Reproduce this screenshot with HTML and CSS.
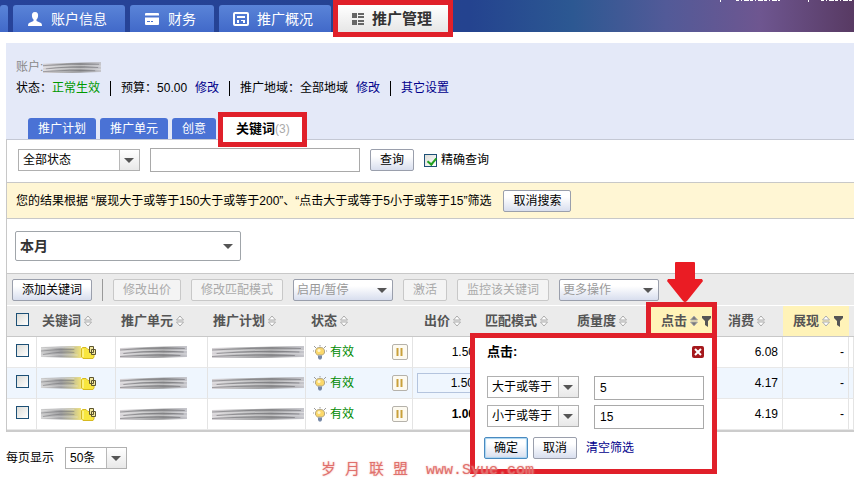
FILE: index.html
```html
<!DOCTYPE html>
<html lang="zh-CN">
  <head>
    <meta charset="UTF-8" />
    <meta name="viewport" content="width=device-width, initial-scale=1.0" />
    <title>推广管理</title>
    <link rel="stylesheet" href="styles.css">
  </head>
  <body>
    <!-- shared icons -->
    <svg class="defs" aria-hidden="true">
      <defs>
        <linearGradient id="fade">
          <stop offset="0" stop-color="#d8d4d8" />
          <stop offset="0.3" stop-color="#b8b8ba" />
          <stop offset="0.65" stop-color="#98989a" />
          <stop offset="1" stop-color="#c6c6cc" />
        </linearGradient>
        <linearGradient id="fade-yellow">
          <stop offset="0" stop-color="#d0d0d0" />
          <stop offset="0.5" stop-color="#a0a0a2" />
          <stop offset="0.75" stop-color="#bcb99a" />
          <stop offset="1" stop-color="#f0e27a" />
        </linearGradient>
      </defs>
      <symbol id="smudge" viewBox="0 0 60 12" preserveAspectRatio="none">
        <path d="M0 2L25 1L60 0V11L30 12L0 12Z" fill="url(#fade)" />
        <path d="M0 4Q30 1 58 2.500M3 7.500Q32 4 57 6M0 10.500Q28 8 54 9.500" fill="none" stroke="#606064" stroke-width="1" opacity="0.5" />
        <path d="M0 6Q25 3 60 4.500M0 9Q25 6 60 8" fill="none" stroke="#f4f4f4" stroke-width="1" opacity="0.5" />
      </symbol>
      <symbol id="smudge-word" viewBox="0 0 60 12" preserveAspectRatio="none">
        <path d="M0 1L60 0V12L0 11Z" fill="url(#fade-yellow)" />
        <path d="M0 5Q25 3 50 3.500M3 8.500Q32 5 50 6.500" fill="none" stroke="#606064" stroke-width="1" opacity="0.5" />
        <path d="M0 3Q20 1 50 1.500M0 10Q25 8 55 9" fill="none" stroke="#f4f4f4" stroke-width="1" opacity="0.5" />
      </symbol>
      <symbol id="sort" viewBox="0 0 8 12">
        <path class="up" d="M4 1L7.500 5H0.500Z" />
        <path class="down" d="M4 11L7.500 7H0.500Z" />
      </symbol>
      <symbol id="funnel" viewBox="0 0 9 11">
        <path d="M0 0H9V2L6 5V11L3 9V5L0 2Z" fill="#555" />
      </symbol>
      <symbol id="folder" viewBox="0 0 16 13">
        <path d="M0.500 2.500L1.500 1.500H5L7 3.500H13V11L12 12.500H2L0.500 11Z" fill="#f8e63e" stroke="#d6b920" />
        <path d="M2 3V11" stroke="#fffbc0" />
        <path d="M8.500 0.500H12.500V6.500H8.500ZM10.500 3.500H14.500V8.500H10.500Z" fill="#f3e9a0" stroke="#5d552f" />
      </symbol>
      <symbol id="bulb" viewBox="0 0 14 15">
        <path d="M7 0V1.500M1 1L3 3M13 1L11 3M0 6H1M13 6H14" stroke="#9a9a9a" fill="none" />
        <path d="M7 2.500A4 4 0 0 1 9.500 10H4.500A4 4 0 0 1 7 2.500Z" fill="#fbd86a" stroke="#b4a680" />
        <circle cx="6" cy="5.500" r="1.500" fill="#fff6cf" />
        <path d="M5 10.500H9V13L8 14.500H6L5 13Z" fill="#7688a6" />
      </symbol>
      <symbol id="pause" viewBox="0 0 16 16">
        <rect x="0.500" y="0.500" width="15" height="15" rx="1.500" fill="#fdfaf0" stroke="#b5b2ab" />
        <path d="M5.500 4V12M9.500 4V12" stroke="#c9a03a" stroke-width="2" />
      </symbol>
    </svg>

    <header>
      <nav class="main-nav">
        <a href="#" class="stub" aria-label="首页"></a>
        <a href="#">
          <svg width="16" height="14" viewBox="0 0 16 14"><path d="M8 0C10.500 0 11.500 2 11 4.500C10.800 6 10 7 9.500 7.500V9L14 11Q15 11.500 15 14H1Q1 11.500 2 11L6.500 9V7.500C6 7 5.200 6 5 4.500C4.500 2 5.500 0 8 0Z" fill="#fff" /></svg>
          账户信息
        </a>
        <a href="#">
          <svg width="16" height="14" viewBox="0 0 16 14"><rect x="1" y="1" width="14" height="12" rx="1" fill="#fff" /><path d="M1 4.500H15" stroke="#4a73cf" stroke-width="2" /><path d="M3 9.500H6M7 9.500H9" stroke="#4a73cf" /></svg>
          财务
        </a>
        <a href="#">
          <svg width="16" height="14" viewBox="0 0 16 14"><rect x="1" y="1" width="14" height="12" rx="1" fill="none" stroke="#fff" stroke-width="2" /><path d="M4 5H12" stroke="#fff" stroke-width="2" /><path d="M4 8H6V11H4ZM8 8H12V11H10V9H8Z" fill="#fff" /></svg>
          推广概况
        </a>
        <a href="#" class="active">
          <svg width="12" height="12" viewBox="0 0 12 12"><path d="M0 0H5V5H0ZM0 7H5V12H0ZM6 0H12V2H6ZM6 3H12V5H6ZM6 7H12V9H6ZM6 10H12V12H6Z" fill="#666" /></svg>
          推广管理
        </a>
      </nav>
      <svg class="user-links" width="134" height="3" viewBox="0 0 134 3" aria-hidden="true">
        <path d="M0.500 0V2M88.500 0V2" stroke="#fff" />
        <path d="M16 0.500H60M101 0.500H134" stroke="#fff" stroke-dasharray="3 2 1 2 5 1" />
      </svg>
    </header>

    <main>
      <section class="account">
        <p class="name">账户:<svg class="blur-name"><use href="#smudge" /></svg></p>
        <ul class="info">
          <li>状态：<span class="ok">正常生效</span></li>
          <li>预算：50.00 <a href="#">修改</a></li>
          <li>推广地域：全部地域 <a href="#">修改</a></li>
          <li><a href="#">其它设置</a></li>
        </ul>
        <nav class="sub-nav">
          <a href="#">推广计划</a>
          <a href="#">推广单元</a>
          <a href="#">创意</a>
          <a href="#" class="active">关键词<small>(3)</small></a>
        </nav>
      </section>

      <div class="panel">
        <form class="search">
          <span class="select state"><select aria-label="状态"><option>全部状态</option></select></span>
          <input type="text" class="query" aria-label="关键词" />
          <button type="button">查询</button>
          <label><input type="checkbox" checked />精确查询</label>
        </form>

        <div class="notice">
          <span>您的结果根据 “展现大于或等于150大于或等于200”、“点击大于或等于5小于或等于15”筛选</span>
          <button type="button">取消搜索</button>
        </div>

        <div class="period">
          <span class="select big"><select aria-label="时间范围"><option>本月</option></select></span>
        </div>

        <div class="toolbar">
          <button type="button">添加关键词</button>
          <i class="line"></i>
          <button type="button" disabled>修改出价</button>
          <button type="button" disabled>修改匹配模式</button>
          <span class="select action"><select aria-label="启用/暂停"><option>启用/暂停</option></select></span>
          <button type="button" disabled>激活</button>
          <button type="button" disabled>监控该关键词</button>
          <span class="select action"><select aria-label="更多操作"><option>更多操作</option></select></span>
        </div>

        <table>
          <colgroup>
            <col class="c-check" />
            <col class="c-word" />
            <col class="c-unit" />
            <col class="c-plan" />
            <col class="c-status" />
            <col class="c-bid" />
            <col class="c-match" />
            <col class="c-quality" />
            <col class="c-num" />
            <col class="c-num" />
            <col class="c-num" />
            <col />
          </colgroup>
          <thead>
            <tr>
              <th><input type="checkbox" aria-label="全选" /></th>
              <th>关键词<svg class="sort"><use href="#sort" /></svg></th>
              <th>推广单元<svg class="sort"><use href="#sort" /></svg></th>
              <th>推广计划<svg class="sort"><use href="#sort" /></svg></th>
              <th>状态<svg class="sort"><use href="#sort" /></svg></th>
              <th class="wide">出价<svg class="sort"><use href="#sort" /></svg></th>
              <th>匹配模式<svg class="sort"><use href="#sort" /></svg></th>
              <th>质量度<svg class="sort"><use href="#sort" /></svg></th>
              <th class="filtered current">点击<svg class="sort asc"><use href="#sort" /></svg><svg class="funnel"><use href="#funnel" /></svg>
                <svg class="arrow" viewBox="0 0 36 40"><path d="M9 0H27Q28 0 28 1V17H35L36 19L20 39Q18 41 16 39L0 19L1 17H8V1Q8 0 9 0Z" fill="#ea1c24" /></svg>
                <form class="popup">
                  <div class="popup-head">
                    <strong>点击:</strong>
                    <button type="button" class="close" aria-label="关闭"><svg width="12" height="12" viewBox="0 0 12 12"><rect width="12" height="12" rx="2" fill="#a5181c" /><path d="M3 3L9 9M9 3L3 9" stroke="#fff" stroke-width="2" /></svg></button>
                  </div>
                  <div class="cond">
                    <span class="select"><select aria-label="下限条件"><option>大于或等于</option></select></span>
                    <input type="text" value="5" aria-label="下限" />
                  </div>
                  <div class="cond">
                    <span class="select"><select aria-label="上限条件"><option>小于或等于</option></select></span>
                    <input type="text" value="15" aria-label="上限" />
                  </div>
                  <div class="popup-foot">
                    <button type="button" class="primary">确定</button>
                    <button type="button">取消</button>
                    <a href="#">清空筛选</a>
                  </div>
                </form>
              </th>
              <th class="wide">消费<svg class="sort"><use href="#sort" /></svg></th>
              <th class="filtered">展现<svg class="sort"><use href="#sort" /></svg><svg class="funnel"><use href="#funnel" /></svg></th>
              <th></th>
            </tr>
          </thead>
          <tbody>
            <tr>
              <td><input type="checkbox" aria-label="选择第1行" /></td>
              <td class="word"><div><svg class="blur"><use href="#smudge-word" /></svg><svg class="folder"><use href="#folder" /></svg></div></td>
              <td class="unit"><svg class="blur"><use href="#smudge" /></svg></td>
              <td class="plan"><svg class="blur"><use href="#smudge" /></svg></td>
              <td><div class="status"><svg class="bulb"><use href="#bulb" /></svg>有效<button type="button" class="pause" aria-label="暂停"><svg><use href="#pause" /></svg></button></div></td>
              <td class="num">1.50</td>
              <td></td>
              <td></td>
              <td></td>
              <td class="num">6.08</td>
              <td class="num">-</td>
              <td></td>
            </tr>
            <tr class="hover">
              <td><input type="checkbox" aria-label="选择第2行" /></td>
              <td class="word"><div><svg class="blur"><use href="#smudge-word" /></svg><svg class="folder"><use href="#folder" /></svg></div></td>
              <td class="unit"><svg class="blur"><use href="#smudge" /></svg></td>
              <td class="plan"><svg class="blur"><use href="#smudge" /></svg></td>
              <td><div class="status"><svg class="bulb"><use href="#bulb" /></svg>有效<button type="button" class="pause" aria-label="暂停"><svg><use href="#pause" /></svg></button></div></td>
              <td class="num"><span class="edit">1.50</span></td>
              <td></td>
              <td></td>
              <td></td>
              <td class="num">4.17</td>
              <td class="num">-</td>
              <td></td>
            </tr>
            <tr>
              <td><input type="checkbox" aria-label="选择第3行" /></td>
              <td class="word"><div><svg class="blur"><use href="#smudge-word" /></svg><svg class="folder"><use href="#folder" /></svg></div></td>
              <td class="unit"><svg class="blur"><use href="#smudge" /></svg></td>
              <td class="plan"><svg class="blur"><use href="#smudge" /></svg></td>
              <td><div class="status"><svg class="bulb"><use href="#bulb" /></svg>有效<button type="button" class="pause" aria-label="暂停"><svg><use href="#pause" /></svg></button></div></td>
              <td class="num"><b>1.00</b></td>
              <td></td>
              <td></td>
              <td></td>
              <td class="num">4.19</td>
              <td class="num">-</td>
              <td></td>
            </tr>
          </tbody>
        </table>
      </div>

      <footer>
        <label for="size">每页显示</label>
        <span class="select size"><select id="size"><option>50条</option></select></span>
        <p class="watermark">岁 月 联 盟&nbsp; www.Syue.com</p>
      </footer>
    </main>
  </body>
</html>
```
FILE: styles.css
```css
* {
  box-sizing: border-box;
}
body {
  margin: 0;
  background: #fff;
  color: #000;
  font: 12px/18px "Liberation Sans", "Noto Sans CJK SC", sans-serif;
}
a {
  color: #00008b;
  text-decoration: none;
}
p,
ul {
  margin: 0;
  padding: 0;
}
svg {
  flex: none;
}
.defs {
  position: absolute;
  width: 0;
  height: 0;
}

/* top navigation */
header {
  display: flex;
  justify-content: space-between;
  height: 32px;
  background: linear-gradient(90deg, #27439a 0, #24438f 55%, #2c5892 67%, #525a98 78%, #6e5690 89%, #583a63 100%);
}
.main-nav {
  display: flex;
  gap: 5px;
}
.main-nav a {
  display: flex;
  align-items: center;
  gap: 8px;
  height: 27px;
  margin-top: 5px;
  padding: 0 18px 0 14px;
  border-radius: 3px 3px 0 0;
  background: linear-gradient(#5a84d8, #4169c9);
  color: #fff;
  font-size: 14px;
}
.main-nav .stub {
  width: 8px;
  padding: 0;
}
.main-nav .active {
  position: relative;
  height: 37px;
  margin: 0 0 0 -3px;
  padding: 0 16px 0 14px;
  border: 5px solid #e0202a;
  border-radius: 0;
  background: linear-gradient(#fff, #e6e6e6);
  color: #333;
  font-size: 15px;
  font-weight: bold;
}

/* account info */
main {
  margin: 11px 0 0 6px;
}
.account {
  display: flex;
  flex-direction: column;
  height: 96px;
  padding: 14px 10px 0;
  background: #e4e9f8;
}
.account .name {
  display: flex;
  align-items: center;
  height: 20px;
  color: #888;
}
.blur-name {
  width: 58px;
  height: 11px;
}
.info {
  display: flex;
  list-style: none;
}
.info li {
  display: flex;
  align-items: center;
  height: 22px;
}
.info li a {
  margin-left: 8px;
}
.info li + li::before {
  content: "";
  width: 1px;
  height: 15px;
  margin: 0 10px;
  background: #000;
}
.info li:last-child a {
  margin-left: 0;
}
.ok {
  color: #009900;
}
.sub-nav {
  display: flex;
  align-items: flex-end;
  gap: 4px;
  margin: auto 12px 0;
}
.sub-nav a {
  height: 21px;
  padding: 2px 10px 0;
  border-radius: 3px 3px 0 0;
  background: #4a72d5;
  color: #fff;
}
.sub-nav .active {
  position: relative;
  height: 35px;
  margin: 0 0 -8px -2px;
  padding: 3px 12px 0 13px;
  border: 5px solid #e0202a;
  border-radius: 0;
  background: #fff;
  color: #000;
  font-size: 13px;
  font-weight: bold;
}
.sub-nav small {
  color: #aaa;
  font-size: 12px;
  font-weight: normal;
}

/* controls */
button,
select,
input {
  margin: 0;
  color: #000;
  font: inherit;
}
button {
  height: 22px;
  padding: 0 9px;
  border: 1px solid #9a9fac;
  border-radius: 2px;
  background: linear-gradient(#fff 30%, #d8deee);
  line-height: 18px;
  white-space: nowrap;
}
button:disabled {
  border-color: #c8c8c8;
  background: #f4f4f4;
  color: #aaa;
}
input[type="text"] {
  height: 24px;
  padding: 0 5px;
  border: 1px solid #a9a9a9;
  background: #fff;
}
input[type="checkbox"] {
  appearance: none;
  position: relative;
  display: block;
  width: 13px;
  height: 13px;
  border: 1px solid #1d5076;
  background: linear-gradient(135deg, #dcdcd7, #fff);
}
input[type="checkbox"]:checked::after {
  content: "";
  position: absolute;
  left: 4px;
  top: 1px;
  width: 4px;
  height: 7px;
  border: solid #21a121;
  border-width: 0 2px 2px 0;
  transform: rotate(40deg);
}
.select {
  position: relative;
  display: inline-flex;
  width: 92px;
  height: 22px;
}
.select select {
  appearance: none;
  width: 100%;
  padding: 0 4px;
  border: 1px solid #b0b0b0;
  border-radius: 0;
  background: linear-gradient(#fff, #e8e8e8) right / 20px 100% no-repeat, #fff;
}
.select::before {
  content: "";
  position: absolute;
  right: 20px;
  top: 1px;
  bottom: 1px;
  border-left: 1px solid #b8b8b8;
}
.select::after {
  content: "";
  position: absolute;
  right: 6px;
  top: 9px;
  border: solid transparent;
  border-width: 5px 5px 0;
  border-top-color: #555;
  pointer-events: none;
}

/* filter rows */
.panel {
  border-left: 1px solid #c8c8c8;
  border-top: 1px solid #c4c8d4;
}
.search {
  display: flex;
  align-items: center;
  gap: 10px;
  height: 42px;
  padding: 0 11px 2px;
}
.search .state {
  width: 122px;
}
.query {
  width: 210px;
}
.search label {
  display: flex;
  align-items: center;
  gap: 4px;
}
.notice {
  display: flex;
  align-items: center;
  gap: 12px;
  height: 37px;
  padding: 0 9px;
  border: solid #c8c8c8;
  border-width: 1px 0;
  background: #fff6d4;
}
.period {
  height: 54px;
  padding: 12px 8px;
}
.big {
  width: 226px;
  height: 30px;
}
.big select {
  border: 1px solid #a0a5aa;
  border-radius: 2px;
  background: #fff;
  color: #333;
  font-size: 14px;
  font-weight: bold;
}
.big::before,
.action::before {
  display: none;
}
.big::after {
  right: 8px;
  top: 13px;
}
.toolbar {
  display: flex;
  align-items: center;
  gap: 10px;
  height: 33px;
  padding: 0 5px;
  border-top: 1px solid #c8c8c8;
  border-bottom: 1px solid #fff;
  background: #ebebeb;
}
.toolbar .line {
  width: 1px;
  height: 22px;
  background: #999;
}
.action {
  width: 100px;
}
.action select {
  border-color: #9a9fac;
  border-radius: 2px;
  background: linear-gradient(#fff 30%, #d8deee);
  color: #999;
  padding: 0 3px;
}

/* keyword table */
table {
  width: 100%;
  border-collapse: separate;
  border-spacing: 0;
  border-bottom: 2px solid #ccc;
  table-layout: fixed;
}
.c-check {
  width: 30px;
}
.c-word {
  width: 79px;
}
.c-unit {
  width: 92px;
}
.c-plan {
  width: 98px;
}
.c-status {
  width: 107px;
}
.c-bid {
  width: 67px;
}
.c-match {
  width: 92px;
}
.c-quality {
  width: 79px;
}
.c-num {
  width: 66px;
}
th {
  height: 31px;
  padding: 0 0 0 5px;
  border-bottom: 1px solid #c8c8c8;
  background: #ebebeb;
  color: #555;
  font-size: 13px;
  text-align: left;
  white-space: nowrap;
}
th:first-child,
td:first-child {
  padding: 0 0 4px 9px;
}
th.wide {
  padding-left: 11px;
}
th.filtered {
  padding-left: 10px;
  background: #fff3b8;
}
.current {
  position: relative;
}
.current::before {
  content: "";
  position: absolute;
  inset: -4px 0 -2px -5px;
  border: 5px solid #e0202a;
}
.sort {
  width: 8px;
  height: 12px;
  margin-left: 3px;
  vertical-align: -2px;
  fill: #fff;
  stroke: #aaa;
}
.asc {
  fill: #777;
}
.funnel {
  width: 9px;
  height: 11px;
  margin-left: 4px;
  vertical-align: -2px;
}
td {
  height: 31px;
  padding: 0 4px;
  border-right: 1px solid #e4e4e4;
  border-bottom: 1px solid #e8e8e8;
}
td svg {
  display: block;
}
.hover td {
  background: #eff6fe;
}
.word div,
.status {
  display: flex;
  align-items: center;
}
.blur {
  width: 67px;
  height: 12px;
}
.word .blur {
  width: 40px;
}
.plan .blur {
  width: 92px;
}
.folder {
  width: 16px;
  height: 13px;
}
.status {
  gap: 3px;
  padding-left: 3px;
  color: #008a00;
}
.bulb {
  width: 14px;
  height: 15px;
}
.pause {
  width: 16px;
  height: 16px;
  margin-left: auto;
  padding: 0;
  border: 0;
  background: none;
}
.pause svg {
  width: 16px;
  height: 16px;
}
.num {
  text-align: right;
}
.edit {
  display: block;
  height: 20px;
  border: 1px solid #b4c4de;
}

/* click filter popup */
.arrow {
  position: absolute;
  left: 16px;
  top: -44px;
  width: 36px;
  height: 40px;
}
.popup {
  position: absolute;
  right: 0;
  top: 27px;
  z-index: 1;
  width: 247px;
  height: 141px;
  padding: 4px 8px 0 12px;
  border: 5px solid #e0202a;
  background: #fff;
  color: #000;
  font-size: 12px;
  font-weight: normal;
}
.popup-head {
  display: flex;
  align-items: center;
  justify-content: space-between;
  height: 20px;
  margin-bottom: 14px;
  font-size: 13px;
}
.close {
  height: 12px;
  padding: 0;
  border: 0;
  background: none;
  line-height: 1;
}
.cond {
  display: flex;
  justify-content: space-between;
  margin-bottom: 5px;
}
.cond input {
  width: 110px;
}
.popup-foot {
  display: flex;
  align-items: center;
  gap: 5px;
  margin: 8px 0 0 -3px;
}
.popup-foot .primary {
  border-color: #4a8ac0;
  box-shadow: inset 0 0 1px 1px #a8d4f0;
}
.popup-foot a {
  margin-left: 4px;
}

footer {
  position: relative;
  display: flex;
  align-items: center;
  gap: 11px;
  height: 48px;
  padding-top: 4px;
}
.size {
  width: 62px;
}
.watermark {
  position: absolute;
  left: 315px;
  bottom: 0;
  z-index: 2;
  color: #e0706c;
  font: 15px/18px "Liberation Mono", "Noto Sans CJK SC", monospace;
  white-space: nowrap;
  text-shadow: 0 0 2px #f0a8a4;
}
```
